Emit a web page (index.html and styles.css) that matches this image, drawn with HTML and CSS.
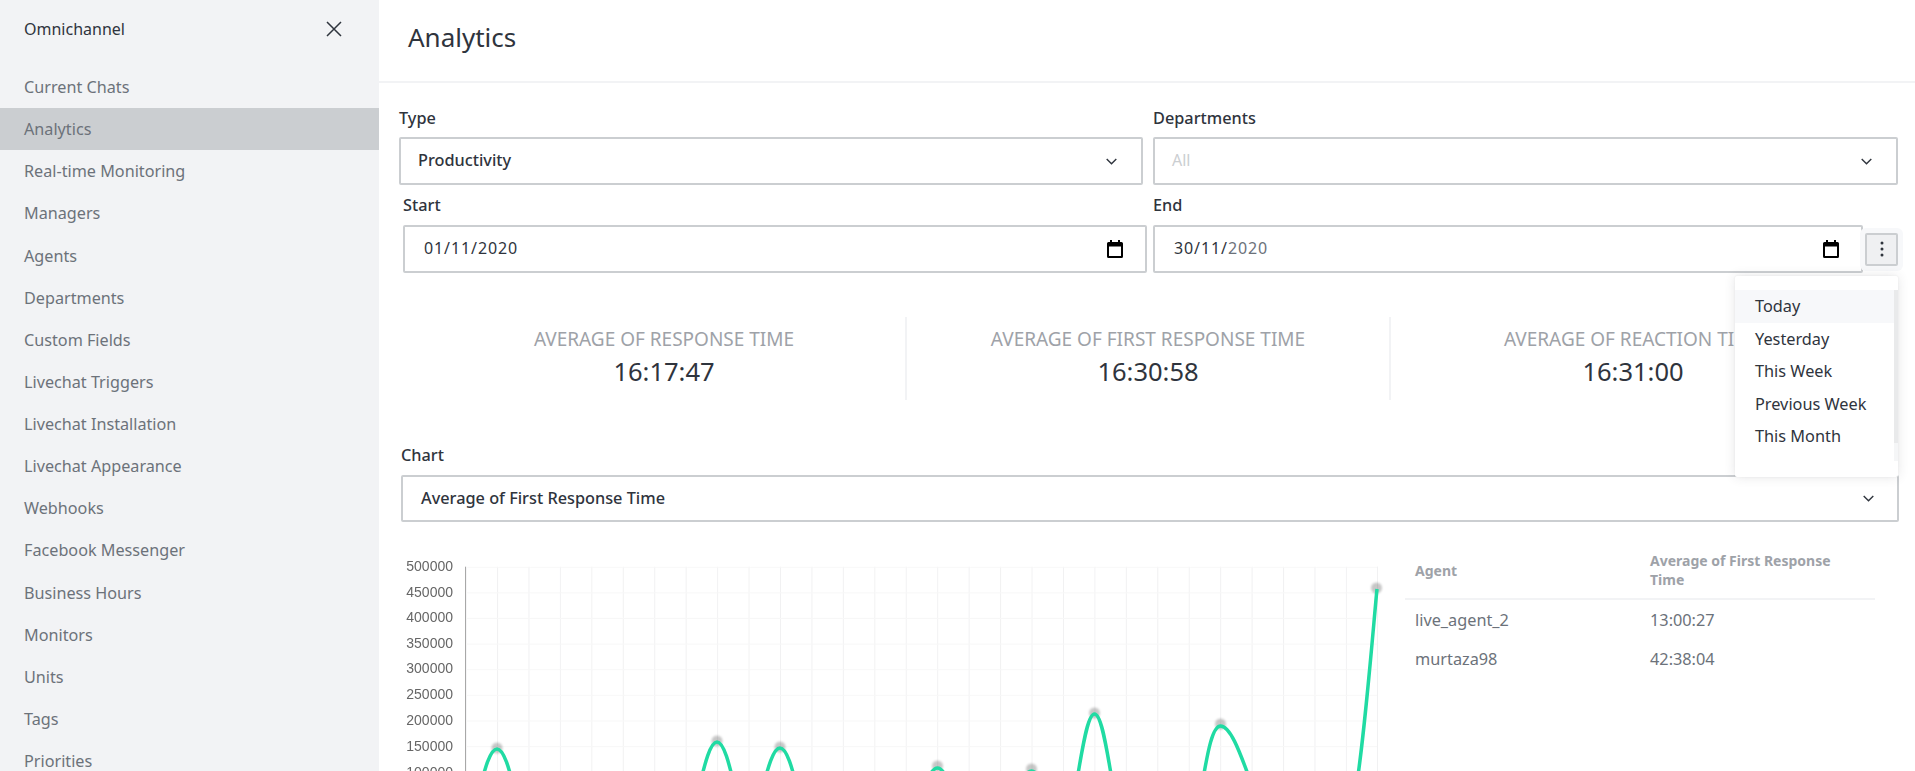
FILE: index.html
```html
<!DOCTYPE html>
<html lang="en">
<head>
    <meta charset="UTF-8">
    <title>Analytics</title>
    <link rel="stylesheet" href="styles.css">
</head>
<body>
    <div class="app">
        <aside class="sidebar">
            <div class="sidebar-head">
                <span class="sidebar-title">Omnichannel</span>
                <svg class="close-icon" width="16" height="16" viewBox="0 0 16 16"><path d="M1 1L15 15M15 1L1 15"/></svg>
            </div>
            <nav class="menu">
                <a class="menu-item">Current Chats</a>
                <a class="menu-item active">Analytics</a>
                <a class="menu-item">Real-time Monitoring</a>
                <a class="menu-item">Managers</a>
                <a class="menu-item">Agents</a>
                <a class="menu-item">Departments</a>
                <a class="menu-item">Custom Fields</a>
                <a class="menu-item">Livechat Triggers</a>
                <a class="menu-item">Livechat Installation</a>
                <a class="menu-item">Livechat Appearance</a>
                <a class="menu-item">Webhooks</a>
                <a class="menu-item">Facebook Messenger</a>
                <a class="menu-item">Business Hours</a>
                <a class="menu-item">Monitors</a>
                <a class="menu-item">Units</a>
                <a class="menu-item">Tags</a>
                <a class="menu-item">Priorities</a>
            </nav>
        </aside>

        <main class="main">
            <header class="page-head">
                <h1>Analytics</h1>
            </header>

            <div class="content">
                <div class="form-row">
                    <div class="field field-type">
                        <label>Type</label>
                        <div class="select strong">
                            <span>Productivity</span>
                            <svg class="chevron" width="11" height="7" viewBox="0 0 11 7"><path d="M0.700 1L5.500 5.800L10.300 1"/></svg>
                        </div>
                    </div>
                    <div class="field field-dept">
                        <label>Departments</label>
                        <div class="select placeholder">
                            <span>All</span>
                            <svg class="chevron" width="11" height="7" viewBox="0 0 11 7"><path d="M0.700 1L5.500 5.800L10.300 1"/></svg>
                        </div>
                    </div>
                </div>

                <div class="form-row date-row">
                    <div class="field field-start">
                        <label>Start</label>
                        <div class="date-input">
                            <span>01/11/2020</span>
                            <svg class="calendar" width="16" height="18" viewBox="0 0 16 18"><path d="M3 0h2v2h6V0h2v2h1.500A1.500 1.500 0 0 1 16 3.500V16.500A1.500 1.500 0 0 1 14.500 18H1.500A1.500 1.500 0 0 1 0 16.500V3.500A1.500 1.500 0 0 1 1.500 2H3zM2 6.500V16h12V6.500z"/></svg>
                        </div>
                    </div>
                    <div class="field field-end">
                        <label>End</label>
                        <div class="end-wrap">
                            <div class="date-input">
                                <span>30/11/<span class="muted-year">2020</span></span>
                                <svg class="calendar" width="16" height="18" viewBox="0 0 16 18"><path d="M3 0h2v2h6V0h2v2h1.500A1.500 1.500 0 0 1 16 3.500V16.500A1.500 1.500 0 0 1 14.500 18H1.500A1.500 1.500 0 0 1 0 16.500V3.500A1.500 1.500 0 0 1 1.500 2H3zM2 6.500V16h12V6.500z"/></svg>
                            </div>
                            <button class="kebab">
                                <svg width="4" height="16" viewBox="0 0 4 16"><circle cx="2" cy="2" r="1.500"/><circle cx="2" cy="8" r="1.500"/><circle cx="2" cy="14" r="1.500"/></svg>
                            </button>
                        </div>
                    </div>
                </div>

                <div class="stats">
                    <div class="stat">
                        <div class="stat-label">AVERAGE OF RESPONSE TIME</div>
                        <div class="stat-value">16:17:47</div>
                    </div>
                    <div class="stat">
                        <div class="stat-label">AVERAGE OF FIRST RESPONSE TIME</div>
                        <div class="stat-value">16:30:58</div>
                    </div>
                    <div class="stat">
                        <div class="stat-label">AVERAGE OF REACTION TIME</div>
                        <div class="stat-value">16:31:00</div>
                    </div>
                </div>

                <div class="field field-chart">
                    <label>Chart</label>
                    <div class="select strong">
                        <span>Average of First Response Time</span>
                        <svg class="chevron" width="11" height="7" viewBox="0 0 11 7"><path d="M0.700 1L5.500 5.800L10.300 1"/></svg>
                    </div>
                </div>

                <div class="chart-row">
                    <svg class="chart" width="996" height="231" viewBox="399 540 996 231">
                        <defs>
                            <pattern id="grid" x="465.6" y="566.7" width="31.44" height="25.63" patternUnits="userSpaceOnUse">
                                <path d="M0.500 0V25.630" stroke="#f1f1f2" fill="none"/>
                                <path d="M0 0.500H31.440" stroke="#f7f7f7" fill="none"/>
                            </pattern>
                        </defs>
                        <rect x="465.6" y="566.7" width="912.400" height="210" fill="url(#grid)"/>
                        <path d="M1377.500 566.700V771" stroke="#f1f1f2"/>
                        <path d="M465.500 566.700V771" stroke="#a8a8a8"/>
                        <g class="axis">
                            <text x="453" y="571">500000</text>
                            <text x="453" y="596.500">450000</text>
                            <text x="453" y="622">400000</text>
                            <text x="453" y="647.500">350000</text>
                            <text x="453" y="673">300000</text>
                            <text x="453" y="699">250000</text>
                            <text x="453" y="725">200000</text>
                            <text x="453" y="750.500">150000</text>
                            <text x="453" y="776.500">100000</text>
                        </g>
                        <g class="halo">
                            <circle cx="497" cy="748" r="5.500"/>
                            <circle cx="717" cy="741" r="5.500"/>
                            <circle cx="780" cy="747" r="5.500"/>
                            <circle cx="937.500" cy="766" r="5.500"/>
                            <circle cx="1031.500" cy="769" r="5.500"/>
                            <circle cx="1094.500" cy="713" r="5.500"/>
                            <circle cx="1220.500" cy="724" r="5.500"/>
                            <circle cx="1376.500" cy="588" r="5.500"/>
                        </g>
                        <path class="line" d="M466 823C476 823 484 749 497 749C510 749 518 823 528 823
                            M685 823C696 823 704 742 717 742C730 742 738 823 748 823
                            M748 823C759 823 767 748 780 748C793 748 801 823 811 823
                            M906 823C917 823 925 768 937.500 768C950 768 958 823 969 823
                            M1000 823C1011 823 1019 771 1031.500 771C1044 771 1052 823 1063 823
                            M1063 823C1076 823 1082 714 1094.500 714C1107 714 1113 823 1126 823
                            M1189 823C1202 823 1205 726 1220.500 726C1232 726 1243 762 1252 785
                            M1346 823C1358 823 1372 640 1377 589"/>
                    </svg>

                    <table class="agents">
                        <thead>
                            <tr>
                                <th class="col-agent">Agent</th>
                                <th><div class="th-wrap">Average of First Response Time</div></th>
                            </tr>
                        </thead>
                        <tbody>
                            <tr>
                                <td>live_agent_2</td>
                                <td>13:00:27</td>
                            </tr>
                            <tr>
                                <td>murtaza98</td>
                                <td>42:38:04</td>
                            </tr>
                        </tbody>
                    </table>
                </div>

                <!-- menu opened from the kebab button -->
                <div class="popover">
                    <div class="popover-scroll">
                        <div class="popover-item current">Today</div>
                        <div class="popover-item">Yesterday</div>
                        <div class="popover-item">This Week</div>
                        <div class="popover-item">Previous Week</div>
                        <div class="popover-item">This Month</div>
                        <div class="popover-item">Previous Month</div>
                    </div>
                </div>
            </div>
        </main>
    </div>
</body>
</html>
```

FILE: styles.css
```css
* {
    box-sizing: border-box;
}

html, body {
    margin: 0;
    height: 771px;
    overflow: hidden;
}

body {
    font-family: "Noto Sans", "Open Sans", sans-serif;
    color: #2f343d;
    background-color: #fff;
}

.app {
    display: flex;
    height: 771px;
}

/* Sidebar */
.sidebar {
    flex: 0 0 379px;
    background-color: #f2f3f5;
    overflow: hidden;
}

.sidebar-head {
    display: flex;
    align-items: center;
    justify-content: space-between;
    height: 58px;
    padding: 0 37px 0 24px;
    margin-bottom: 8px;
}

.sidebar-title {
    font-size: 16px;
    color: #2f343d;
}

.close-icon path {
    stroke: #2f343d;
    stroke-width: 1.5;
    fill: none;
}

.menu-item {
    display: block;
    height: 42.13px;
    line-height: 42px;
    padding-left: 24px;
    font-size: 16.2px;
    color: #6c727a;
}

.menu-item.active {
    background-color: #cbced1;
}

/* Main area */
.main {
    flex: 1;
    min-width: 0;
}

.page-head {
    height: 83px;
    padding: 0 0 0 29px;
    display: flex;
    align-items: center;
    border-bottom: 2px solid #f2f3f5;
}

.page-head h1 {
    margin: 0 0 7px;
    font-size: 26px;
    font-weight: 400;
    color: #2f343d;
}

.content {
    position: relative;
    padding: 26px 16px 0 20px;
}

.form-row {
    display: flex;
}

.field label {
    display: block;
    font-size: 16.3px;
    font-weight: 500;
    line-height: 18px;
    margin-bottom: 10px;
    color: #2f343d;
}

.field-type {
    width: 744px;
    margin-right: 10px;
}

.field-dept {
    flex: 1;
    margin-right: 1px;
}

.select, .date-input {
    display: flex;
    align-items: center;
    justify-content: space-between;
    height: 48px;
    padding: 0 22px 2px 17px;
    border: 2px solid #cbced1;
    border-radius: 2px;
    font-size: 16px;
    background-color: #fff;
}

.select.strong {
    font-size: 16.3px;
    font-weight: 500;
}

.select.placeholder {
    color: #cbced1;
}

.chevron {
    margin-right: 2px;
    margin-top: 2px;
}

.chevron path {
    stroke: #2f343d;
    stroke-width: 1.4;
    fill: none;
}

.date-row {
    margin-top: 11px;
    padding-left: 4px;
}

.date-row .field label {
    margin-bottom: 11px;
}

.field-start {
    width: 744px;
    margin-right: 6px;
}

.field-end {
    flex: 1;
}

.end-wrap {
    display: flex;
    align-items: center;
}

.date-input {
    flex: 1;
    color: #2f343d;
    padding-left: 19px;
    padding-right: 22px;
    letter-spacing: 0.9px;
}

.muted-year {
    color: #6c727a;
}

.calendar {
    fill: #000;
    margin-top: 2px;
}

.kebab {
    flex: 0 0 33px;
    height: 33px;
    margin-left: 2px;
    margin-right: 1px;
    padding: 0;
    display: flex;
    align-items: center;
    justify-content: center;
    background-color: #eff0f2;
    border: 2px solid #cbced1;
    border-radius: 2px;
    box-shadow: 0 0 0 5px #f7f8fa;
}

.kebab svg {
    fill: #2f343d;
}

/* Stats */
.stats {
    display: flex;
    margin: 44px 0 0 24px;
    height: 83px;
}

.stat {
    flex: 0 0 484px;
    display: flex;
    flex-direction: column;
    justify-content: center;
    text-align: center;
    border-right: 2px solid #f2f3f5;
}

.stat:last-child {
    border-right: none;
}

.stat-label {
    font-size: 19px;
    line-height: 24px;
    color: #9ea2a8;
    white-space: nowrap;
}

.stat-value {
    margin-top: 1px;
    font-size: 25.5px;
    line-height: 38px;
    color: #2f343d;
}

/* Chart */
.field-chart {
    margin: 46px 0 0 2px;
}

.field-chart label {
    margin-bottom: 11px;
}

.field-chart .select {
    height: 47px;
    padding-left: 18px;
    padding-right: 21px;
}

.chart-row {
    display: flex;
    margin-top: 18px;
}

.chart {
    flex: 0 0 996px;
    filter: blur(0.4px);
}

.axis text {
    font-family: "Liberation Sans", Arial, sans-serif;
    font-size: 14px;
    fill: #666;
    text-anchor: end;
}

.halo {
    filter: blur(1px);
}

.halo circle {
    fill: rgba(0, 0, 0, 0.22);
}

.line {
    fill: none;
    stroke: #20dba3;
    stroke-width: 3.500;
}

/* Table */
.agents {
    margin-left: 10px;
    width: 470px;
    height: 0;
    border-collapse: collapse;
    table-layout: fixed;
    font-size: 16.3px;
    color: #6c727a;
}

.agents th {
    padding: 11px 10px 9px;
    font-size: 14px;
    line-height: 19px;
    font-weight: 700;
    text-align: left;
    color: #9ea2a8;
    border-bottom: 2px solid #f2f3f5;
}

.col-agent {
    width: 235px;
}

.th-wrap {
    max-width: 195px;
}

.agents td {
    height: 40px;
    padding: 0 10px;
}

/* Popover */
.popover {
    position: absolute;
    top: 193px;
    right: 17px;
    width: 163px;
    height: 201px;
    padding-top: 14px;
    background-color: #fff;
    border-radius: 2px;
    box-shadow: 0 0 2px 0 rgba(47, 52, 61, 0.08), 0 0 12px 0 rgba(47, 52, 61, 0.12);
}

.popover-scroll {
    height: 171px;
    overflow: hidden;
    padding-right: 4px;
    background: linear-gradient(#e9eaeb, #e9eaeb) right top / 4px 153px no-repeat,
        linear-gradient(#f5f6f7, #f5f6f7) right top / 4px 100% no-repeat;
}

.popover-item {
    height: 32.500px;
    line-height: 32px;
    padding-left: 20px;
    font-size: 16.3px;
    color: #2f343d;
}

.popover-item.current {
    background-color: #f7f8fa;
}
```
